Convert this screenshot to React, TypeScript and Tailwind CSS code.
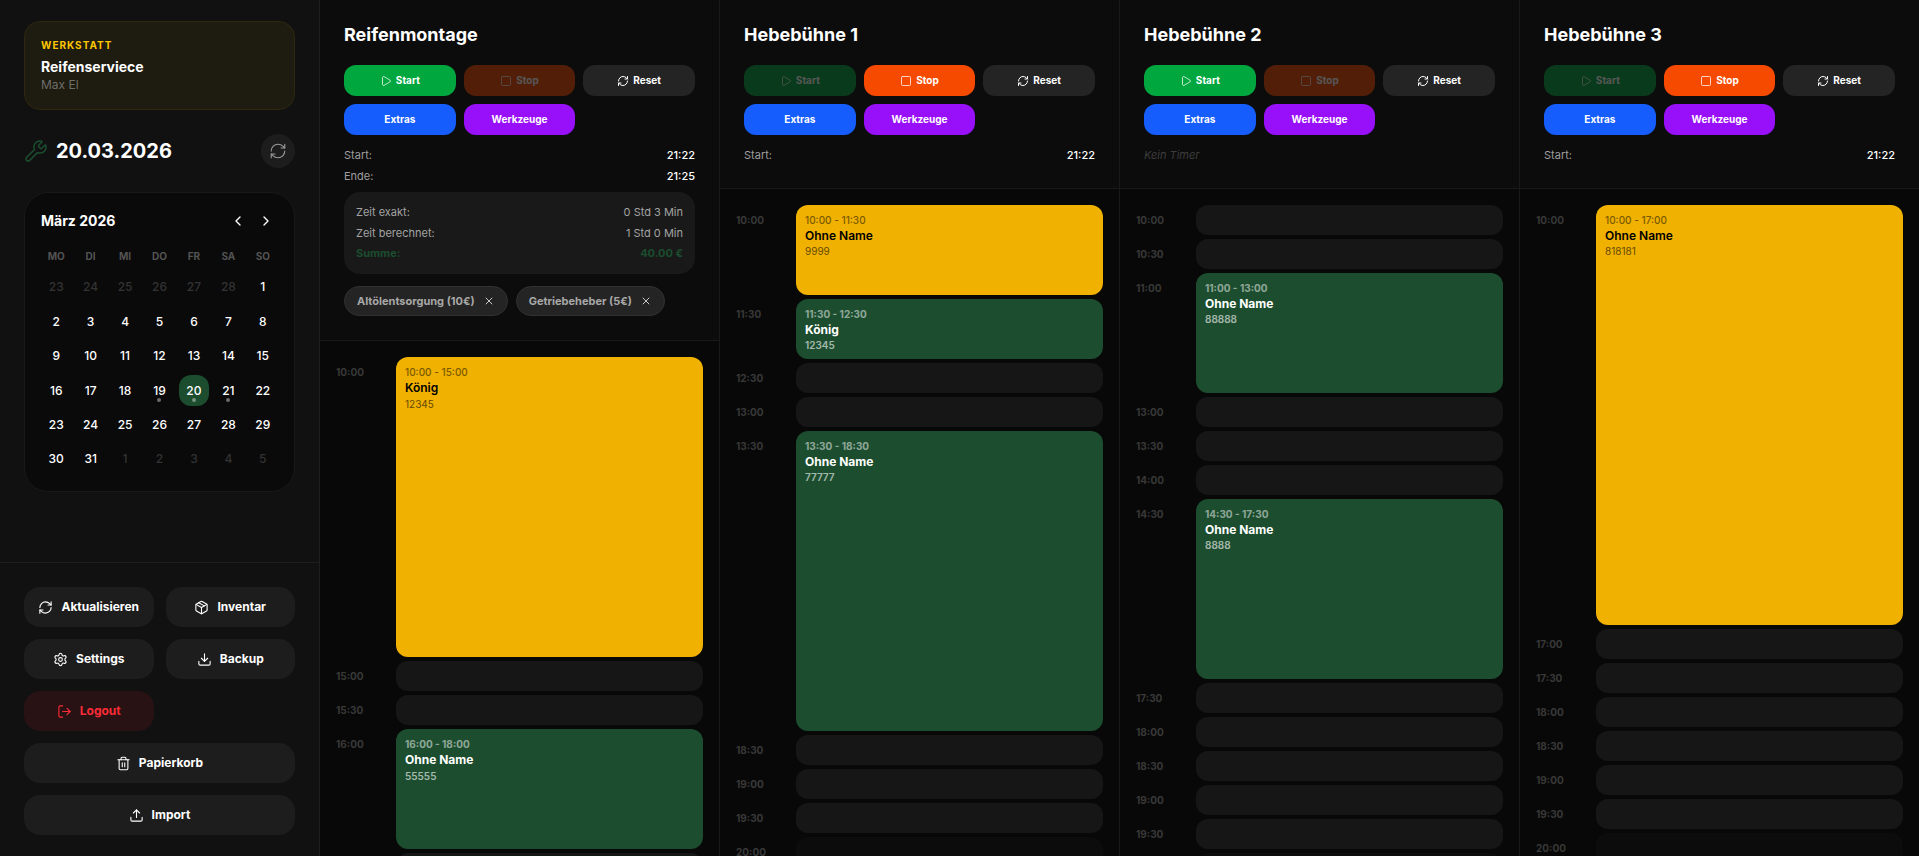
import type { ReactNode } from 'react'
import {
  ChevronLeft, ChevronRight, Download, LogOut, Package, Play, RefreshCw,
  Settings, Square, Trash2, Upload, Wrench, X,
} from 'lucide-react'

type Termin = {
  von: string
  bis: string
  name: string
  nummer: string
  erledigt?: boolean
}

type Buehne = {
  name: string
  start?: string
  ende?: string
  abrechnung?: { exakt: string; berechnet: string; summe: string }
  extras?: string[]
  termine: Termin[]
}

const BUEHNEN: Buehne[] = [
  {
    name: 'Reifenmontage',
    start: '21:22',
    ende: '21:25',
    abrechnung: { exakt: '0 Std 3 Min', berechnet: '1 Std 0 Min', summe: '40.00 €' },
    extras: ['Altölentsorgung (10€)', 'Getriebeheber (5€)'],
    termine: [
      { von: '10:00', bis: '15:00', name: 'König', nummer: '12345' },
      { von: '16:00', bis: '18:00', name: 'Ohne Name', nummer: '55555', erledigt: true },
    ],
  },
  {
    name: 'Hebebühne 1',
    start: '21:22',
    termine: [
      { von: '10:00', bis: '11:30', name: 'Ohne Name', nummer: '9999' },
      { von: '11:30', bis: '12:30', name: 'König', nummer: '12345', erledigt: true },
      { von: '13:30', bis: '18:30', name: 'Ohne Name', nummer: '77777', erledigt: true },
    ],
  },
  {
    name: 'Hebebühne 2',
    termine: [
      { von: '11:00', bis: '13:00', name: 'Ohne Name', nummer: '88888', erledigt: true },
      { von: '14:30', bis: '17:30', name: 'Ohne Name', nummer: '8888', erledigt: true },
    ],
  },
  {
    name: 'Hebebühne 3',
    start: '21:22',
    termine: [{ von: '10:00', bis: '17:00', name: 'Ohne Name', nummer: '818181' }],
  },
]

const WOCHENTAGE = ['MO', 'DI', 'MI', 'DO', 'FR', 'SA', 'SO']
const MIT_TERMIN = [19, 20, 21]
const HEUTE = 20

const SLOT_HOEHE = 30
const OEFFNET = 10 * 60
const SCHLIESST = 20 * 60

const minuten = (zeit: string) => {
  const [h, m] = zeit.split(':').map(Number)
  return h * 60 + m
}

const uhrzeit = (min: number) =>
  `${String(Math.floor(min / 60)).padStart(2, '0')}:${String(min % 60).padStart(2, '0')}`

// 23.02. bis 05.04.2026
const TAGE = Array.from({ length: 42 }, (_, i) => {
  const d = new Date(2026, 1, 23 + i)
  return { tag: d.getDate(), imMonat: d.getMonth() === 2 }
})

function zeilen(termine: Termin[]) {
  const rows: { min: number; termin?: Termin }[] = []
  let t = OEFFNET
  while (t <= SCHLIESST) {
    const termin = termine.find(x => minuten(x.von) === t)
    rows.push({ min: t, termin })
    t = termin ? minuten(termin.bis) : t + 30
  }
  return rows
}

function Kalender() {
  return (
    <section className="mt-6 rounded-3xl border border-[#191919] bg-[#0a0a0a] p-4">
      <div className="mb-4 flex items-center justify-between">
        <h2 className="text-sm font-bold">März 2026</h2>
        <div className="flex gap-1">
          <button aria-label="Vorheriger Monat" className="flex size-6 items-center justify-center">
            <ChevronLeft size={16} />
          </button>
          <button aria-label="Nächster Monat" className="flex size-6 items-center justify-center">
            <ChevronRight size={16} />
          </button>
        </div>
      </div>
      <div className="mb-2 grid grid-cols-7 gap-1 text-center text-[10px] leading-normal font-bold text-[#535353]">
        {WOCHENTAGE.map(t => <span key={t}>{t}</span>)}
      </div>
      <div className="grid grid-cols-7 gap-1">
        {TAGE.map(({ tag, imMonat }, i) => (
          <button
            key={i}
            className={`relative flex aspect-square items-center justify-center rounded-xl text-xs font-medium ${
              !imMonat ? 'text-[#333]' : tag === HEUTE ? 'bg-[#1b4d2e]' : ''
            }`}
          >
            {tag}
            {imMonat && MIT_TERMIN.includes(tag) && (
              <span className="absolute bottom-1 left-1/2 size-1 -translate-x-1/2 rounded-full bg-white/40" />
            )}
          </button>
        ))}
      </div>
    </section>
  )
}

function MenuButton({ icon, label, className = 'bg-[#1d1d1d]' }: { icon: ReactNode; label: string; className?: string }) {
  return (
    <button className={`flex h-10 items-center justify-center gap-2 rounded-2xl text-xs font-bold ${className}`}>
      {icon}
      {label}
    </button>
  )
}

function Sidebar() {
  return (
    <aside className="flex w-80 shrink-0 flex-col border-r border-[#1e1e1e] bg-[#111]">
      <div className="flex-1 px-6 pt-[21px]">
        <div className="rounded-2xl border border-[#2f270f] bg-[#1e1b10] p-4">
          <p className="text-[10px] leading-normal font-bold tracking-widest text-[#fdc700]">WERKSTATT</p>
          <p className="mt-1 text-sm font-bold">Reifenserviece</p>
          <p className="text-xs text-[#6f6e69]">Max El</p>
        </div>
        <div className="mt-6 flex items-center justify-between">
          <div className="flex items-center gap-2">
            <Wrench size={24} strokeWidth={1.5} className="text-[#1b4d2e]" />
            <h1 className="text-xl font-bold">20.03.2026</h1>
          </div>
          <button aria-label="Neu laden" className="flex size-[34px] items-center justify-center rounded-full bg-[#1d1d1d] text-[#9a9a9a]">
            <RefreshCw size={18} strokeWidth={1.5} />
          </button>
        </div>
        <Kalender />
      </div>
      <nav className="grid grid-cols-2 gap-3 border-t border-[#1e1e1e] px-6 pt-6 pb-[21px]">
        <MenuButton icon={<RefreshCw size={15} strokeWidth={1.75} />} label="Aktualisieren" />
        <MenuButton icon={<Package size={15} strokeWidth={1.75} />} label="Inventar" />
        <MenuButton icon={<Settings size={15} strokeWidth={1.75} />} label="Settings" />
        <MenuButton icon={<Download size={15} strokeWidth={1.75} />} label="Backup" />
        <MenuButton icon={<LogOut size={15} strokeWidth={1.75} />} label="Logout" className="bg-[#281214] text-[#fb2c36]" />
        <MenuButton icon={<Trash2 size={15} strokeWidth={1.75} />} label="Papierkorb" className="col-span-2 bg-[#1d1d1d]" />
        <MenuButton icon={<Upload size={15} strokeWidth={1.75} />} label="Import" className="col-span-2 bg-[#1d1d1d]" />
      </nav>
    </aside>
  )
}

function TimerButton({ className, disabled, children }: { className: string; disabled?: boolean; children: ReactNode }) {
  return (
    <button
      disabled={disabled}
      className={`flex items-center justify-center gap-1 rounded-xl py-2 text-[10px] leading-normal font-bold disabled:opacity-30 ${className}`}
    >
      {children}
    </button>
  )
}

function Zeile({ label, wert }: { label: string; wert: string }) {
  return (
    <div className="flex justify-between">
      <span>{label}</span>
      <span>{wert}</span>
    </div>
  )
}

function Kopf({ buehne }: { buehne: Buehne }) {
  const { name, start, ende, abrechnung, extras } = buehne
  const laeuft = Boolean(start && !ende)

  return (
    <header className="border-b border-[#191919] bg-[#0c0c0c] px-6 pt-[21px] pb-6 text-[11px] leading-normal">
      <h2 className="mb-4 text-lg font-bold">{name}</h2>
      <div className="mb-3 grid grid-cols-3 gap-2">
        <TimerButton className="bg-green-600" disabled={laeuft}>
          <Play size={12} strokeWidth={1.5} /> Start
        </TimerButton>
        <TimerButton className="bg-orange-600" disabled={!laeuft}>
          <Square size={12} strokeWidth={1.5} /> Stop
        </TimerButton>
        <TimerButton className="bg-[#242424]">
          <RefreshCw size={12} /> Reset
        </TimerButton>
        <TimerButton className="bg-blue-600">Extras</TimerButton>
        <TimerButton className="bg-purple-600">Werkzeuge</TimerButton>
      </div>

      <div className="flex flex-col gap-1">
        {!start && <p className="text-[#3d3d3d] italic">Kein Timer</p>}
        {start && (
          <div className="flex justify-between">
            <span className="text-[#9e9e9e]">Start:</span>
            <span className="font-medium">{start}</span>
          </div>
        )}
        {ende && (
          <div className="flex justify-between">
            <span className="text-[#9e9e9e]">Ende:</span>
            <span className="font-medium">{ende}</span>
          </div>
        )}
      </div>

      {abrechnung && (
        <div className="mt-2 flex flex-col gap-1 rounded-2xl bg-[#191919] p-3 text-[#a3a3a3]">
          <Zeile label="Zeit exakt:" wert={abrechnung.exakt} />
          <Zeile label="Zeit berechnet:" wert={abrechnung.berechnet} />
          <div className="font-bold text-[#1b4d2e]">
            <Zeile label="Summe:" wert={abrechnung.summe} />
          </div>
        </div>
      )}

      {extras && (
        <div className="mt-3 flex flex-wrap gap-2">
          {extras.map(extra => (
            <span
              key={extra}
              className="flex items-center gap-2 rounded-full border border-[#313131] bg-[#242424] px-3 py-1.5 font-bold text-[#a8a8a8]"
            >
              {extra}
              <button aria-label={`${extra} entfernen`} className="text-[#c8c8c8]">
                <X size={12} />
              </button>
            </span>
          ))}
        </div>
      )}
    </header>
  )
}

function TerminKarte({ termin }: { termin: Termin }) {
  const slots = (minuten(termin.bis) - minuten(termin.von)) / 30
  return (
    <button
      style={{ height: slots * SLOT_HOEHE }}
      className={`flex flex-1 flex-col items-start rounded-xl px-[9px] py-2 text-left text-[10px] leading-normal ${
        termin.erledigt ? 'bg-[#1b4d2e] text-white' : 'bg-[#f0b100] text-black'
      }`}
    >
      <span className={termin.erledigt ? 'font-bold opacity-50' : 'font-medium opacity-50'}>
        {termin.von} - {termin.bis}
      </span>
      <span className={`text-xs leading-snug ${termin.erledigt ? 'font-bold' : 'font-semibold'}`}>
        {termin.name}
      </span>
      <span className={termin.erledigt ? 'font-semibold opacity-60' : 'opacity-60'}>{termin.nummer}</span>
    </button>
  )
}

function Spalte({ buehne }: { buehne: Buehne }) {
  return (
    <section className="flex min-w-[400px] flex-1 flex-col border-r border-[#191919]">
      <Kopf buehne={buehne} />
      <div className="flex min-h-0 flex-1 flex-col gap-1 overflow-y-auto p-4 [scrollbar-width:none]">
        {zeilen(buehne.termine).map(({ min, termin }) => (
          <div key={min} className="flex shrink-0 items-start gap-3">
            <span className="w-12 pt-2 text-[10px] leading-normal font-bold text-[#383838]">{uhrzeit(min)}</span>
            {termin ? (
              <TerminKarte termin={termin} />
            ) : (
              <button
                aria-label={`${uhrzeit(min)} frei`}
                style={{ height: SLOT_HOEHE }}
                className={`flex-1 rounded-xl ${min < SCHLIESST ? 'bg-[#161616]' : 'bg-[#0c0c0c]'}`}
              />
            )}
          </div>
        ))}
      </div>
    </section>
  )
}

export default function App() {
  return (
    <div className="flex h-screen overflow-hidden bg-[#080808] font-['Inter',sans-serif] text-white">
      <Sidebar />
      <main className="flex min-w-0 flex-1 overflow-x-auto [scrollbar-width:none]">
        {BUEHNEN.map(b => <Spalte key={b.name} buehne={b} />)}
      </main>
    </div>
  )
}
